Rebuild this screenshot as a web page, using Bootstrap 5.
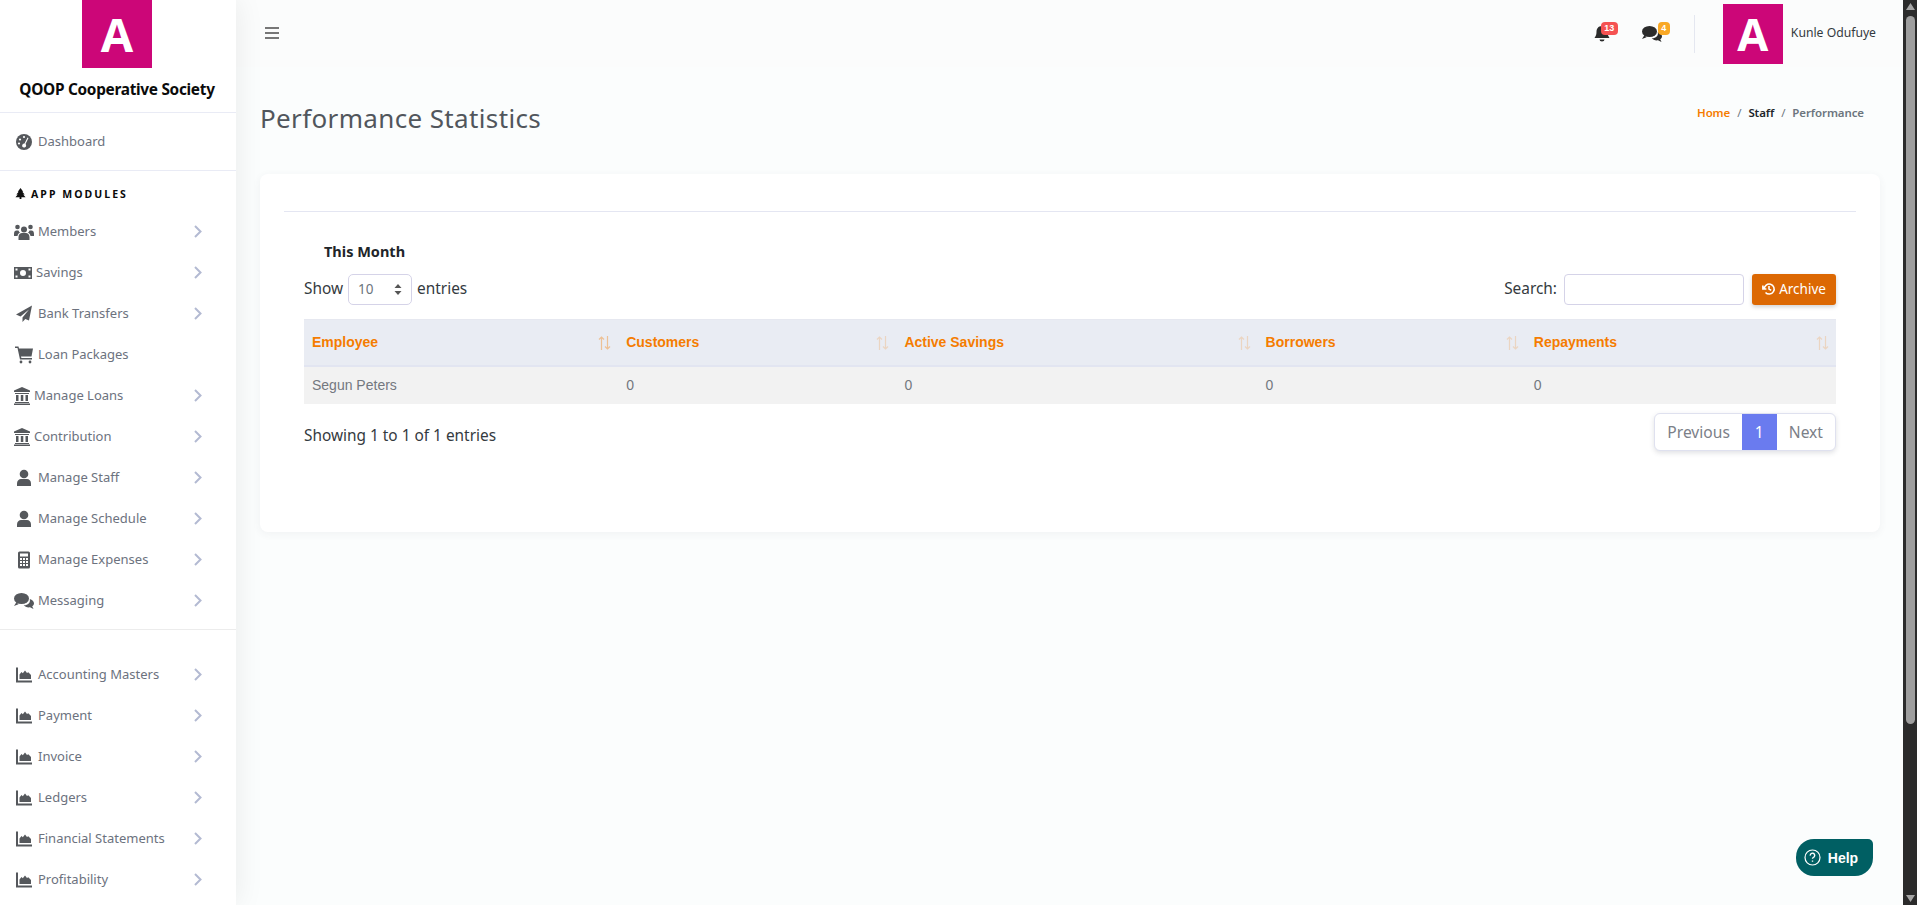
<!doctype html>
<html lang="en">
<head>
<meta charset="utf-8">
<title>Performance Statistics</title>
<link rel="stylesheet" href="https://cdn.jsdelivr.net/npm/bootstrap@5.3.0/dist/css/bootstrap.min.css">
<style>
html,body{height:905px;overflow:hidden}
body{background:#fbfdfd;font-family:"Noto Sans",sans-serif;font-size:15.4px;color:#343a40}
.shell{height:905px}
.side{width:236px;flex:none;background:#fff;box-shadow:0 0 28px rgba(0,0,0,.08);z-index:2;height:905px;overflow:hidden}
.logo-box{background:#cc0678;color:#fff;font-family:"Open Sans",sans-serif;font-weight:700;display:flex;align-items:center;justify-content:center;line-height:1}
.logo-lg{width:70px;height:68px;font-size:47px;margin-right:2px}
.logo-sm{width:60px;height:60px;font-size:45px}
.brand-name{font-size:15.4px;font-weight:700;color:#0b0b0b;height:45px;line-height:44px;text-align:center;border-bottom:1px solid #e9ebf5;white-space:nowrap;letter-spacing:-.3px;padding-right:2px}
.nav-item-row{height:41px;color:#6c727e;font-size:13px;padding-right:34px;white-space:nowrap}
.dash-row{height:58px;border-bottom:1px solid #e9ebf5}
.nav-ico{width:24px;height:18px;margin-left:14px;fill:#55585c;flex:none}
.nav-lbl{flex:1}
.lbl-b{margin-left:-4px}
.lbl-c{margin-left:-2px}
.chev{width:8px;height:13px;fill:none;stroke:#b3bad2;stroke-width:2;flex:none}
.mod-head{height:40px;padding:15px 0 0 15px;line-height:16px;font-size:10.5px;font-weight:700;letter-spacing:2.05px;color:#0a0a0a}
.mod-head svg{width:11px;height:11px;fill:#111;margin-right:5px;vertical-align:-1px}
.sep-row{border-top:1px solid #ececec;margin-top:8px;height:25px}
.main-col{min-width:0;background:#fbfdfd}
.topbar{height:67px;padding:0 27px 0 29px;background:#fbfcfc}
.burger{width:14px;height:14px;stroke:#777;stroke-width:2;fill:none;margin-top:-2px}
.tb-ico{width:20px;height:18px;fill:#2b2b2b;display:block}
.tb-bell{width:18px;height:18px}
.tb-chat{width:21px;height:18px;margin:0 31px}
.cnt{position:absolute;top:-3px;font-size:9px;font-weight:700;color:#fff;line-height:13px;height:13px;border-radius:4px;text-align:center;font-family:"Liberation Sans",sans-serif}
.cnt-r{background:#f55252;width:17px;left:8px}
.cnt-o{background:#f9a825;width:12px;left:16px}
.vline{width:1px;height:38px;background:#e4e7f0;margin-right:28px}
.uname{font-size:12.2px;color:#343a40;white-space:nowrap;margin-left:8px}
.headline{padding:0 39px 4px 24px;height:107px}
.page-h{font-size:26px;color:#51565c;font-weight:400;margin:0;letter-spacing:.36px}
.crumbs{font-size:11.5px;font-weight:600;color:#6c757d;margin-top:-12px;letter-spacing:-.1px}
.crumbs .c1{color:#f57c00}
.crumbs .c2{color:#212529}
.crumbs i{font-style:normal;font-weight:400;margin:0 7px}
.panel{margin:0 23px 0 24px;height:358px;background:#fff;border-radius:8px;box-shadow:0 2px 8px rgba(60,70,90,.06);padding:37px 24px 0 24px}
.panel-rule{height:1px;background:#e4e6f2}
.mon{font-size:14.5px;font-weight:700;color:#212529;margin:29px 0 0 40px;line-height:20px}
.dt-wrap{padding:0 20px}
.tool{height:38px;margin:9px 0 11px}
.tool-up{margin-top:-1px}
.sel{width:64px;height:31px;border:1px solid #d5d3e8;border-radius:5px;margin:0 5px;padding:0 9px;color:#6c757d;font-size:13.5px}
.sel svg{width:8px;height:13px;fill:#555}
.srch{width:180px;height:31px;border:1px solid #d5d3e8;border-radius:4px;margin:0 8px 0 7px;background:#fff}
.arch{height:31px;width:84px;background:#dc6803;color:#fff;font-size:13.5px;border:0;border-radius:3px;padding:0;box-shadow:0 2px 4px rgba(0,0,0,.18)}
.arch svg{width:14px;height:14px;fill:none;stroke:#fff;margin-right:3px;vertical-align:-2px}
.tbl{width:100%;table-layout:fixed;border-collapse:collapse;font-family:"Liberation Sans",sans-serif;font-size:14px}
.tbl th{background:#e9ecf3;color:#f57c00;font-weight:700;height:46px;padding:0 8px;border-top:1px solid #e6e8f0;border-bottom:2px solid #e2e5f1;position:relative}
.tbl td{background:#f2f2f2;color:#74787f;height:38px;padding:0 8px}
.sort{position:absolute;right:7px;top:16px;width:13px;height:14px;fill:none;stroke:#f57c00;stroke-width:1.2;opacity:.2}
.sort-first{opacity:.38}
.foot{margin-top:9px;height:38px}
.foot-note{padding-top:8px}
.pager{height:38px;border:1px solid #dfe1ef;border-radius:6px;box-shadow:0 2px 5px rgba(60,70,90,.16);overflow:hidden;background:#fff;color:#7b8088;font-size:15.6px}
.pager div{padding:0 12px;line-height:36px}
.pager .cur{background:#6a7bef;color:#fff;padding:0 13px}
.help{position:absolute;left:1796px;top:839px;width:77px;height:37px;padding-right:7px;background:#005f63;color:#fff;border-radius:18px 5px 18px 18px;font:700 14px "Liberation Sans",sans-serif;z-index:5}
.help svg{width:17px;height:17px;margin-right:7px;stroke:#fff;fill:none}
.bar{width:14px;flex:none;background:#2b2b2b;height:905px}
.bar-btn{height:16px;width:14px;fill:#a5a5a5;flex:none}
.bar-track{flex:1;padding:0 2px 0 3px}
.bar-thumb{height:708px;background:#9e9e9e;border-radius:5px}
</style>
</head>
<body>
<svg width="0" height="0" class="d-none">
<defs>
<symbol id="i-dash" viewBox="0 0 24 18"><circle cx="10" cy="9" r="8"/><circle cx="6" cy="6.500" r="1.100" fill="#fff"/><circle cx="10" cy="4" r="1.100" fill="#fff"/><circle cx="5" cy="10.500" r="1.100" fill="#fff"/><path d="M13.500 4.500l1 .6-3 6a2 2 0 11-1-.5z" fill="#fff"/></symbol>
<symbol id="i-users" viewBox="0 0 24 18"><circle cx="10" cy="6.500" r="3"/><circle cx="3.500" cy="4" r="2.300"/><circle cx="16.500" cy="4" r="2.300"/><path d="M4.500 17v-3c0-2.600 1.800-4 3.500-4h4c1.700 0 3.500 1.400 3.500 4v3zM0 11c0-2.500 1-3.500 2.500-3.500h2c.3.900.8 1.500 1.500 2-1.500.8-2.300 2-2.500 3.500H0zM20 11c0-2.500-1-3.500-2.500-3.500h-2c-.3.900-.8 1.500-1.500 2 1.500.8 2.300 2 2.500 3.500H20z"/></symbol>
<symbol id="i-money" viewBox="0 0 24 18"><path fill-rule="evenodd" d="M0 3h18v12H0zM9 6a3 3 0 100 6 3 3 0 000-6zM1.500 4.500v2h2v-2zM14.500 4.500v2h2v-2zM1.500 11.500v2h2v-2zM14.500 11.500v2h2v-2z"/></symbol>
<symbol id="i-plane" viewBox="0 0 24 18"><path d="M18 .5L2 9.500l4.500 2L15 4.500l-6.500 8V17l2.800-3 3.700 1.500z"/></symbol>
<symbol id="i-cart" viewBox="0 0 24 18"><path d="M1 .5h3.500l.5 2h14l-1.500 8H7l.4 1.500H18v1.500H6L3.500 2H1z"/><circle cx="7" cy="16" r="1.400"/><circle cx="16" cy="16" r="1.400"/></symbol>
<symbol id="i-bank" viewBox="0 0 24 18"><path d="M8 0l8 3.500V5H0V3.500zM1 6h14v1H1zM2 8h2.500v6H2zM6.800 8h2.500v6H6.800zM11.500 8H14v6h-2.500zM1 15h14v1H1zM0 16.500h16V18H0z"/></symbol>
<symbol id="i-user" viewBox="0 0 24 18"><circle cx="10" cy="5" r="4.300"/><path d="M3 17v-2.500c0-3 2-4.500 4-4.500h6c2 0 4 1.500 4 4.500V17z"/></symbol>
<symbol id="i-calc" viewBox="0 0 24 18"><path fill-rule="evenodd" d="M5.500.5h9A1.500 1.500 0 0116 2v14a1.500 1.500 0 01-1.500 1.500h-9A1.500 1.500 0 014 16V2A1.500 1.500 0 015.500.5zM6 2.500v3h8v-3zM6 7v2h2V7zM9 7v2h2V7zM12 7v2h2V7zM6 10v2h2v-2zM9 10v2h2v-2zM12 10v2h2v-2zM6 13v2h2v-2zM9 13v2h2v-2zM12 13v2h2v-2z"/></symbol>
<symbol id="i-chat" viewBox="0 0 24 18"><ellipse cx="7.500" cy="6.500" rx="7.500" ry="5.500"/><path d="M2.500 10L0 14l4.500-1.800zM15.800 7c2.500.7 4.200 2.300 4.200 4.300 0 1.200-.7 2.300-1.800 3l1.300 2.700-3.500-1.700c-2.700.4-5-.5-6.300-2 4 .2 7-2.300 6.100-6.300z"/></symbol>
<symbol id="i-chart" viewBox="0 0 24 18"><path d="M2 1.500h2V14.500H18v2H2zM5.500 13V8.500l2-2.500 1.300 1.200 2.200-2.700 2 2.500 1.300-.8L17 9v4z"/></symbol>
<symbol id="i-chev" viewBox="0 0 8 13"><path d="M1 1l5.500 5.500L1 12"/></symbol>
<symbol id="i-sort" viewBox="0 0 13 14"><path d="M3.500 14V1M1 3.500L3.500 1 6 3.500M9.500 0v13M7 10.500L9.500 13 12 10.500"/></symbol>
</defs>
</svg>
<div class="shell d-flex position-relative">
  <aside class="side">
    <div class="d-flex justify-content-center"><div class="logo-box logo-lg">A</div></div>
    <div class="brand-name">QOOP Cooperative Society</div>
    <div class="nav-item-row dash-row d-flex align-items-center"><svg class="nav-ico"><use href="#i-dash"/></svg><span class="nav-lbl">Dashboard</span></div>
    <div class="mod-head"><svg viewBox="0 0 12 12"><path d="M6 0l3 4H8l2.500 3H9l2.500 3H7v2H5v-2H.5L3 7H1.500L4 4H3z"/></svg>APP MODULES</div>
    <div class="nav-item-row d-flex align-items-center"><svg class="nav-ico"><use href="#i-users"/></svg><span class="nav-lbl">Members</span><svg class="chev"><use href="#i-chev"/></svg></div>
    <div class="nav-item-row d-flex align-items-center"><svg class="nav-ico"><use href="#i-money"/></svg><span class="nav-lbl lbl-c">Savings</span><svg class="chev"><use href="#i-chev"/></svg></div>
    <div class="nav-item-row d-flex align-items-center"><svg class="nav-ico"><use href="#i-plane"/></svg><span class="nav-lbl">Bank Transfers</span><svg class="chev"><use href="#i-chev"/></svg></div>
    <div class="nav-item-row d-flex align-items-center"><svg class="nav-ico"><use href="#i-cart"/></svg><span class="nav-lbl">Loan Packages</span></div>
    <div class="nav-item-row d-flex align-items-center"><svg class="nav-ico"><use href="#i-bank"/></svg><span class="nav-lbl lbl-b">Manage Loans</span><svg class="chev"><use href="#i-chev"/></svg></div>
    <div class="nav-item-row d-flex align-items-center"><svg class="nav-ico"><use href="#i-bank"/></svg><span class="nav-lbl lbl-b">Contribution</span><svg class="chev"><use href="#i-chev"/></svg></div>
    <div class="nav-item-row d-flex align-items-center"><svg class="nav-ico"><use href="#i-user"/></svg><span class="nav-lbl">Manage Staff</span><svg class="chev"><use href="#i-chev"/></svg></div>
    <div class="nav-item-row d-flex align-items-center"><svg class="nav-ico"><use href="#i-user"/></svg><span class="nav-lbl">Manage Schedule</span><svg class="chev"><use href="#i-chev"/></svg></div>
    <div class="nav-item-row d-flex align-items-center"><svg class="nav-ico"><use href="#i-calc"/></svg><span class="nav-lbl">Manage Expenses</span><svg class="chev"><use href="#i-chev"/></svg></div>
    <div class="nav-item-row d-flex align-items-center"><svg class="nav-ico"><use href="#i-chat"/></svg><span class="nav-lbl">Messaging</span><svg class="chev"><use href="#i-chev"/></svg></div>
    <div class="sep-row"></div>
    <div class="nav-item-row d-flex align-items-center"><svg class="nav-ico"><use href="#i-chart"/></svg><span class="nav-lbl">Accounting Masters</span><svg class="chev"><use href="#i-chev"/></svg></div>
    <div class="nav-item-row d-flex align-items-center"><svg class="nav-ico"><use href="#i-chart"/></svg><span class="nav-lbl">Payment</span><svg class="chev"><use href="#i-chev"/></svg></div>
    <div class="nav-item-row d-flex align-items-center"><svg class="nav-ico"><use href="#i-chart"/></svg><span class="nav-lbl">Invoice</span><svg class="chev"><use href="#i-chev"/></svg></div>
    <div class="nav-item-row d-flex align-items-center"><svg class="nav-ico"><use href="#i-chart"/></svg><span class="nav-lbl">Ledgers</span><svg class="chev"><use href="#i-chev"/></svg></div>
    <div class="nav-item-row d-flex align-items-center"><svg class="nav-ico"><use href="#i-chart"/></svg><span class="nav-lbl">Financial Statements</span><svg class="chev"><use href="#i-chev"/></svg></div>
    <div class="nav-item-row d-flex align-items-center"><svg class="nav-ico"><use href="#i-chart"/></svg><span class="nav-lbl">Profitability</span><svg class="chev"><use href="#i-chev"/></svg></div>
  </aside>
  <div class="main-col flex-grow-1">
    <header class="topbar d-flex align-items-center">
      <svg class="burger" viewBox="0 0 14 14"><path d="M0 2h14M0 7h14M0 12h14"/></svg>
      <div class="ms-auto d-flex align-items-center">
        <div class="tb-bell position-relative">
          <svg class="tb-ico" viewBox="0 0 18 18"><path d="M8 1c-4 0-5.500 3-5.500 6 0 3-1 4.500-2 6h15c-1-1.500-2-3-2-6 0-3-1.500-6-5.500-6zM5.500 14.500a2.500 2 0 005 0z"/></svg>
          <span class="cnt cnt-r">13</span>
        </div>
        <div class="tb-chat position-relative">
          <svg class="tb-ico" viewBox="0 0 20 18"><use href="#i-chat" width="24" height="18"/></svg>
          <span class="cnt cnt-o">4</span>
        </div>
        <div class="vline"></div>
        <div class="logo-box logo-sm">A</div>
        <div class="uname">Kunle Odufuye</div>
      </div>
    </header>
    <section class="headline d-flex justify-content-between align-items-center">
      <h1 class="page-h">Performance Statistics</h1>
      <div class="crumbs"><span class="c1">Home</span><i>/</i><span class="c2">Staff</span><i>/</i>Performance</div>
    </section>
    <section class="panel">
      <div class="panel-rule"></div>
      <div class="mon">This Month</div>
      <div class="dt-wrap">
        <div class="tool d-flex align-items-center">
          <span class="tool-up">Show</span>
          <div class="sel d-flex align-items-center justify-content-between"><span>10</span><svg viewBox="0 0 8 13"><path d="M4 1l3.500 4h-7zM4 12L.5 8h7z"/></svg></div>
          <span class="tool-up">entries</span>
          <span class="ms-auto">Search:</span>
          <div class="srch"></div>
          <button class="arch" type="button"><svg viewBox="0 0 16 16"><path d="M2.500 8a5.700 5.700 0 111.500 3.900M8 4.500V8l2.500 1.500M1 4v4h4" stroke-width="1.800"/></svg>Archive</button>
        </div>
        <table class="tbl">
          <colgroup><col style="width:314px"><col style="width:278px"><col style="width:361px"><col style="width:268px"><col style="width:310px"></colgroup>
          <thead><tr>
            <th>Employee<svg class="sort sort-first"><use href="#i-sort"/></svg></th>
            <th>Customers<svg class="sort"><use href="#i-sort"/></svg></th>
            <th>Active Savings<svg class="sort"><use href="#i-sort"/></svg></th>
            <th>Borrowers<svg class="sort"><use href="#i-sort"/></svg></th>
            <th>Repayments<svg class="sort"><use href="#i-sort"/></svg></th>
          </tr></thead>
          <tbody><tr><td>Segun Peters</td><td>0</td><td>0</td><td>0</td><td>0</td></tr></tbody>
        </table>
        <div class="foot d-flex justify-content-between align-items-center">
          <span class="foot-note">Showing 1 to 1 of 1 entries</span>
          <div class="pager d-flex"><div>Previous</div><div class="cur">1</div><div>Next</div></div>
        </div>
      </div>
    </section>
  </div>
  <div class="bar d-flex flex-column">
    <svg class="bar-btn" viewBox="0 0 14 16"><path d="M7.500 3l4.500 7H3z"/></svg>
    <div class="bar-track"><div class="bar-thumb"></div></div>
    <svg class="bar-btn" viewBox="0 0 14 16"><path d="M7.500 13L3 6h9z"/></svg>
  </div>
  <div class="help d-flex align-items-center justify-content-center">
    <svg viewBox="0 0 17 17"><circle cx="8.500" cy="8.500" r="7.500" stroke-width="1.200"/><path d="M6.300 6.700a2.200 2.200 0 114 .9c-.6.800-1.800 1-1.800 2.200M8.500 11.500v1.300" stroke-width="1.400"/></svg>Help
  </div>
</div>
<script src="https://cdn.jsdelivr.net/npm/bootstrap@5.3.0/dist/js/bootstrap.bundle.min.js"></script>
</body>
</html>
